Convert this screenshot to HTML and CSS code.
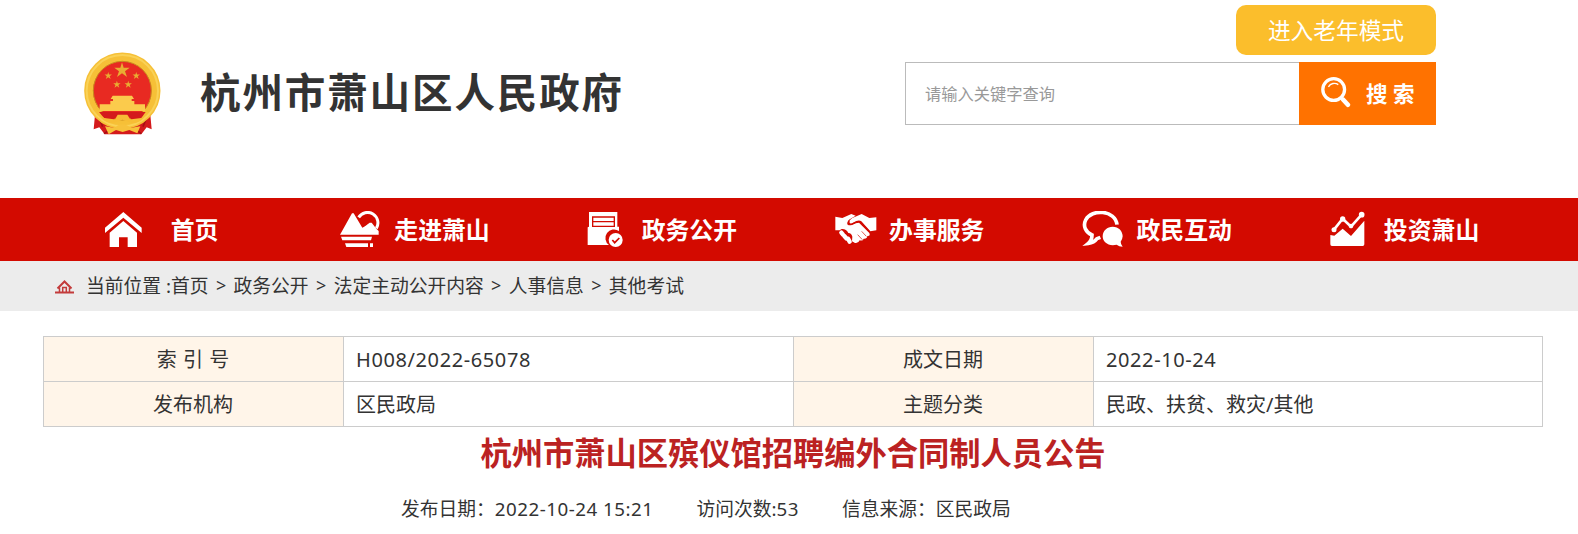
FILE: index.html
```html
<!DOCTYPE html>
<html lang="zh-CN">
<head>
    <meta charset="UTF-8">
    <meta name="viewport" content="width=device-width, initial-scale=1.0">
    <title>杭州市萧山区人民政府</title>
    <link rel="stylesheet" href="styles.css">
</head>
<body>

    <header class="header">
        <a class="logo">
            <svg class="emblem" viewBox="0 0 231 252">
                <path d="M34 178 L29 232 L46 226 L62 247 H172 L188 226 L203 232 L198 178 Z" fill="#d41a1c"/>
                <path d="M45 196 L56 224 M188 196 L177 224 M82 230 L60 245 M150 230 L172 245" stroke="#a50f14" stroke-width="5"/>
                <ellipse cx="115" cy="116" rx="101" ry="101" fill="#e82a22" stroke="#f6c037" stroke-width="27"/>
                <ellipse cx="115" cy="116" rx="87" ry="88" fill="none" stroke="#c98a1e" stroke-width="3"/>
                <ellipse cx="115" cy="116" rx="107" ry="107" fill="none" stroke="#fad257" stroke-width="6"/>
                <g fill="#e9ad32">
                    <path id="star" d="M114 31 L119 47 H137 L123 58 L129 75 L114 64 L99 75 L105 58 L91 47 H109 Z"/>
                    <use href="#star" transform="translate(18 45) scale(.48)"/>
                    <use href="#star" transform="translate(102 45) scale(.48)"/>
                    <use href="#star" transform="translate(44 71) scale(.48)"/>
                    <use href="#star" transform="translate(78 71) scale(.48)"/>
                </g>
                <path d="M86 131 H144 L150 141 H143 V147 H151 V157 H183 V177 H47 V157 H79 V147 H87 V141 H80 Z" fill="#fbcb4c"/>
                <path d="M45 180 H185 L172 198 L142 202 L132 190 H100 L90 202 L60 198 Z" fill="#d41a1c"/>
                <path d="M43 184 C64 205 84 209 92 205 L101 188 H130 L140 205 C152 209 170 205 188 184 C170 216 150 216 134 210 L115 203 L97 210 C78 216 62 214 43 184 Z" fill="#f7bd35"/>
                <path d="M63 223 L94 228 C101 213 130 213 138 228 L169 223 L160 244 L136 234 L116 240 L96 234 L74 247 Z" fill="#f7c23c"/>
            </svg>
            <h1 class="site-name">杭州市萧山区人民政府</h1>
        </a>
        <div class="tools">
            <button class="elder">进入老年模式</button>
            <form class="search">
                <input type="text" class="keyword" placeholder="请输入关键字查询">
                <button type="button" class="submit">
                    <svg class="search-icon" viewBox="0 0 90 94" fill="none" stroke="#fff">
                        <circle cx="38" cy="38" r="33" stroke-width="10"/>
                        <path d="M22 30 C28 19 42 16 52 23" stroke-width="4"/>
                        <path d="M60 62 L67 69" stroke-width="8"/>
                        <path d="M67 69 L81 84" stroke-width="14" stroke-linecap="round"/>
                    </svg>
                    <span>搜 索</span>
                </button>
            </form>
        </div>
    </header>

    <nav class="nav">
        <a class="nav-item">
            <svg class="nav-icon nav-icon-home" viewBox="68 63 132 111" fill="#fff">
                <path d="M129 66 L184 113 V129 L129 83 L74 129 V113 Z"/>
                <path d="M129 93 L170 128 V171 H142 V142 H116 V171 H88 V128 Z"/>
            </svg>
            <span>首页</span>
        </a>
        <a class="nav-item">
            <svg class="nav-icon" viewBox="774 63 132 111" fill="#fff">
                <path d="M836 82 A30 30 0 1 1 889 115" fill="none" stroke="#fff" stroke-width="9"/>
                <path d="M780 134 L816 70 H821 L847 113 L855 109 L869 98 H875 L889 116 L896 123 V134 Z"/>
                <path d="M783 140 H876 L873 151 H787 Z M795 160 H864 V171 H799 Z M870 160 H879 V171 H870 Z"/>
            </svg>
            <span>走进萧山</span>
        </a>
        <a class="nav-item">
            <svg class="nav-icon" viewBox="76 63 132 111" fill="#fff">
                <path d="M88 66 H173 V110 H178 V123 A24 24 0 0 0 148 165 H84 V112 L88 110 Z"/>
                <path d="M99 109 V81 H164 V109 Z M99 95 H163" fill="none" stroke="#d30a00" stroke-width="4"/>
                <circle cx="168" cy="150" r="21"/>
                <path d="M158 150 L165 158 L179 144" fill="none" stroke="#d30a00" stroke-width="5"/>
            </svg>
            <span>政务公开</span>
        </a>
        <a class="nav-item">
            <svg class="nav-icon" viewBox="818 63 132 111" fill="#fff">
                <path d="M825 80 L846 84 L873 72 L886 77 L866 89 Q858 98 862 104 Q870 109 886 100 L896 98 L927 129 Q931 139 921 138 Q920 147 910 146 Q908 154 898 151 Q894 161 884 159 L875 154 L876 140 Q874 130 864 129 Q858 116 844 117 L838 121 L825 121 Z"/>
                <path d="M876 84 L904 72 L927 84 L948 82 V121 L930 124 L903 94 Q898 90 888 93 L872 101 Q863 98 869 90 Z"/>
                <path d="M843 128 L848 134 M852 138 L858 145 M863 146 L868 155" fill="none" stroke="#fff" stroke-width="13" stroke-linecap="round"/>
                <path d="M866 92 Q862 103 872 104 L889 96 Q897 93 902 98 L929 127" fill="none" stroke="#d30a00" stroke-width="4"/>
                <path d="M892 134 L906 149 M904 124 L918 139" fill="none" stroke="#d30a00" stroke-width="2"/>
            </svg>
            <span>办事服务</span>
        </a>
        <a class="nav-item">
            <svg class="nav-icon" viewBox="61 63 132 111" fill="#fff">
                <path d="M172 104 C167 60 96 55 78 90 C69 108 78 127 97 135 Q97 151 86 160 Q103 158 112 146 L122 142" fill="none" stroke="#fff" stroke-width="11"/>
                <path d="M159 110 C177 110 189 123 189 139 Q188 150 183 155 Q183 163 189 170 Q178 170 171 164 C147 170 129 157 129 139 C129 122 143 110 159 110 Z"/>
            </svg>
            <span>政民互动</span>
        </a>
        <a class="nav-item">
            <svg class="nav-icon" viewBox="803 63 132 111" fill="#fff">
                <path d="M821 119 L847 86 L872 110 L904 74" fill="none" stroke="#fff" stroke-width="8"/>
                <circle cx="821" cy="119" r="7.5"/>
                <circle cx="847" cy="87" r="8"/>
                <circle cx="872" cy="108" r="7"/>
                <circle cx="904" cy="74" r="8.5"/>
                <path d="M810 135 L822 137 L847 116 L872 138 L912 92 V163 Q912 168 907 168 H815 Q810 168 810 163 Z"/>
            </svg>
            <span>投资萧山</span>
        </a>
    </nav>

    <div class="crumbs">
        <svg class="crumb-icon" viewBox="0 0 19 14" fill="none" stroke="#c33b3b">
            <path d="M0 12.5 H19" stroke-width="2"/>
            <path d="M2.5 8.5 L9.5 1.5 L16.5 8.5" stroke-width="2"/>
            <path d="M4.5 7.5 V12 M14.5 7.5 V12 M7.7 12 V7.5 H11.3 V12" stroke-width="1.5"/>
        </svg>
        <span class="here">当前位置 :</span>
        <a>首页</a><i>&gt;</i><a>政务公开</a><i>&gt;</i><a>法定主动公开内容</a><i>&gt;</i><a>人事信息</a><i>&gt;</i><a>其他考试</a>
    </div>

    <main class="content">
        <table class="info">
            <tr>
                <th class="spaced">索 引 号</th>
                <td class="num">H008/2022-65078</td>
                <th>成文日期</th>
                <td class="num">2022-10-24</td>
            </tr>
            <tr>
                <th>发布机构</th>
                <td>区民政局</td>
                <th>主题分类</th>
                <td>民政、扶贫、救灾/其他</td>
            </tr>
        </table>

        <h2 class="title">杭州市萧山区殡仪馆招聘编外合同制人员公告</h2>
        <div class="meta">
            <span>发布日期：<b>2022-10-24 15:21</b></span>
            <span>访问次数:<b>53</b></span>
            <span>信息来源：区民政局</span>
        </div>
    </main>

</body>
</html>
```

FILE: styles.css
```css
* {
    box-sizing: border-box;
}
body {
    margin: 0;
    background: #fff;
    color: #333;
    font-family: "Noto Sans", "Noto Sans CJK SC", sans-serif;
    overflow: hidden;
}
button, input {
    font-family: inherit;
    border: none;
    padding: 0;
}

/* header */
.header {
    display: flex;
    justify-content: space-between;
    height: 198px;
    padding: 5px 142px 0 84px;
}
.logo {
    display: flex;
    padding-top: 47px;
}
.emblem {
    width: 77px;
    height: 84px;
}
.site-name {
    margin: 10px 0 0 39px;
    font-size: 40.5px;
    line-height: 61px;
    letter-spacing: 1.9px;
    white-space: nowrap;
}
.tools {
    display: flex;
    flex-direction: column;
    align-items: flex-end;
    gap: 7px;
}
.elder {
    width: 200px;
    height: 50px;
    padding-bottom: 1px;
    border-radius: 10px;
    background: #fbbe2c;
    color: #fff;
    font-size: 22.7px;
}
.search {
    display: flex;
    height: 63px;
}
.keyword {
    width: 394px;
    padding-left: 19px;
    border: 1px solid #bbb;
    border-right: none;
    font-size: 16.25px;
}
.keyword::placeholder {
    color: #999;
}
.submit {
    display: flex;
    align-items: center;
    width: 137px;
    padding: 0 0 3px 22px;
    background: #ff7200;
    color: #fff;
    font-size: 21.5px;
    font-weight: bold;
}
.search-icon {
    width: 30px;
    height: 31px;
    margin-right: 15px;
}

/* main menu */
.nav {
    display: grid;
    grid-template-columns: repeat(6, 247.4px);
    height: 63px;
    padding-left: 90.6px;
    background: #d30a00;
}
.nav-item {
    display: flex;
    align-items: center;
    color: #fff;
    font-size: 23.85px;
    font-weight: bold;
}
.nav-item span {
    width: 96px;
    margin-left: 12px;
    padding-bottom: 2px;
    text-align: center;
    white-space: nowrap;
}
.nav-icon {
    width: 44px;
    height: 37px;
}
.nav-icon-home {
    margin: 0 -12px 0 12px;
}

/* breadcrumb */
.crumbs {
    display: flex;
    align-items: center;
    height: 50px;
    padding: 0 0 2px 55px;
    background: #ececec;
    font-size: 18.78px;
}
.crumbs i {
    width: 25px;
    font-size: 18px;
    font-style: normal;
    text-align: center;
}
.crumb-icon {
    width: 19px;
    height: 14px;
    margin: 4px 12px 0 0;
}
.here {
    width: 85px;
    white-space: nowrap;
}

/* article */
.content {
    width: 1500px;
    margin: 25px 0 0 43px;
}
.info {
    width: 1499px;
    table-layout: fixed;
    border-collapse: collapse;
    font-size: 20px;
}
.info th, .info td {
    height: 45px;
    padding: 2px 0 0;
    border: 1px solid #ccc;
    line-height: 28px;
}
.info th {
    width: 300px;
    padding-right: 1px;
    background: #fff5e9;
    font-weight: normal;
}
.info .spaced {
    word-spacing: 1px;
}
.info td {
    width: 450px;
    padding-left: 12px;
}
.info td:last-child {
    width: 449px;
}
.info .num {
    letter-spacing: 0.6px;
}
.title {
    margin: 5px 0 0;
    color: #bb2222;
    font-size: 31.25px;
    line-height: 42px;
    text-align: center;
}
.meta {
    display: flex;
    gap: 43px;
    margin-top: 20px;
    padding-left: 358px;
    font-size: 18.75px;
    line-height: 30px;
}
.meta b {
    font-weight: normal;
    letter-spacing: 0.5px;
}
```
